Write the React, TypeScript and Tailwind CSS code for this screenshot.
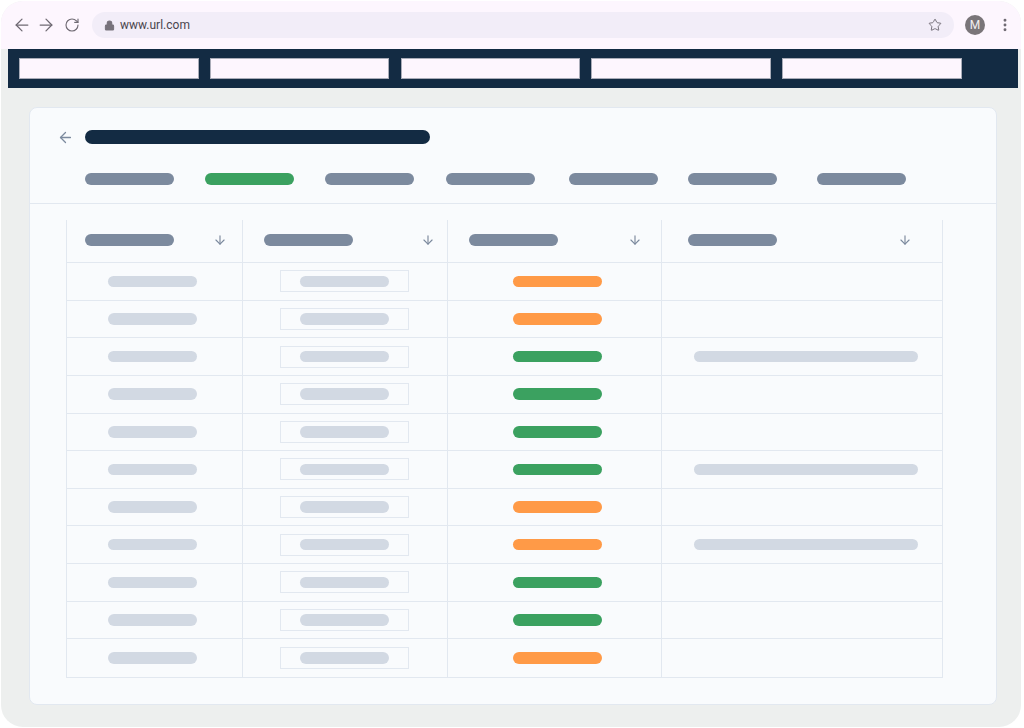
import { ArrowDown, ArrowLeft, ArrowRight, EllipsisVertical, Lock, RotateCw, Star } from 'lucide-react'

const navItems = [1, 2, 3, 4, 5]

const tabs = [
  { margin: '', color: 'bg-[#7c8a9e]' },
  { margin: 'ml-[31.5px]', color: 'bg-[#3ba160]' },
  { margin: 'ml-[31.5px]', color: 'bg-[#7c8a9e]' },
  { margin: 'ml-[32.5px]', color: 'bg-[#7c8a9e]' },
  { margin: 'ml-[34.5px]', color: 'bg-[#7c8a9e]' },
  { margin: 'ml-[30.5px]', color: 'bg-[#7c8a9e]' },
  { margin: 'ml-[40.5px]', color: 'bg-[#7c8a9e]' },
]

const columns = [
  { pad: 'pl-[18px] pr-[15px]', last: false },
  { pad: 'pl-[21px] pr-[12px]', last: false },
  { pad: 'pl-[21px] pr-[19px]', last: false },
  { pad: 'pl-[26px] pr-[30px]', last: true },
]

const rows = [
  { status: 'orange', note: false },
  { status: 'orange', note: false },
  { status: 'green', note: true },
  { status: 'green', note: false },
  { status: 'green', note: false },
  { status: 'green', note: true },
  { status: 'orange', note: false },
  { status: 'orange', note: true },
  { status: 'green', note: false },
  { status: 'green', note: false },
  { status: 'orange', note: false },
]

const Pill = ({ className }: { className: string }) => (
  <div className={`h-[11.5px] rounded-full ${className}`} />
)

const BrowserBar = () => (
  <div className="flex h-[48px] items-center bg-[#fdf6fe] pl-[11px] text-[#6f6a73]">
    <ArrowLeft size={20} strokeWidth={1.5} />
    <ArrowRight size={20} strokeWidth={1.5} className="ml-[4px]" />
    <RotateCw size={16} strokeWidth={1.7} className="ml-[8px]" />
    <div className="ml-[12px] flex h-[26px] w-[862px] items-center rounded-full bg-[#f2edf8] pl-[12px] pr-[12px]">
      <Lock size={11} strokeWidth={2.2} fill="currentColor" className="text-[#77727b]" />
      <span className="ml-[5px] font-['Roboto',sans-serif] text-[12px] text-[#4a454e]">www.url.com</span>
      <Star size={14} strokeWidth={1.6} className="ml-auto" />
    </div>
    <div className="ml-[11px] flex h-[20px] w-[20px] items-center justify-center rounded-full bg-[#7a7579] font-['Roboto',sans-serif] text-[12px] text-[#f1eef1]">
      M
    </div>
    <EllipsisVertical size={16} strokeWidth={2.4} className="ml-[12px]" />
  </div>
)

const NavBar = () => (
  <div className="ml-[7px] flex h-[39px] w-[1010px] items-center gap-[11.25px] bg-[#132b43] pl-[11px]">
    {navItems.map((item) => (
      <div key={item} className="h-[21px] w-[179.5px] border border-[#a9acb8] bg-[#fdf6fe]" />
    ))}
  </div>
)

const App = () => {
  return (
    <div className="h-[728px] w-[1024px] overflow-hidden bg-white pl-px pt-px">
      <div className="h-[726px] w-[1020px] overflow-hidden rounded-[22px] bg-[#edefee]">
        <BrowserBar />
        <NavBar />

        <div className="ml-[28px] mt-[19px] h-[598px] w-[968px] rounded-lg border border-[#e2e8f0] bg-[#f9fbfd]">
          <div className="mt-[22px] flex h-[14px] items-center pl-[27px]">
            <ArrowLeft size={17} strokeWidth={1.8} className="text-[#7c8a9e]" />
            <div className="ml-[11px] h-[14px] w-[345px] rounded-full bg-[#132b43]" />
          </div>

          <div className="mt-[29px] flex border-b border-[#e2e8f0] pb-[18.5px] pl-[55px]">
            {tabs.map((tab, index) => (
              <Pill key={index} className={`w-[88.5px] ${tab.margin} ${tab.color}`} />
            ))}
          </div>

          <div className="ml-[36px] mt-[16px] w-[877px] border-b border-[#e2e8f0]">
            <div className="grid h-[43px] grid-cols-[176px_205px_214px_282px] border-b border-[#e2e8f0]">
              {columns.map((col, index) => (
                <div
                  key={index}
                  className={`flex items-center justify-between border-l border-[#e2e8f0] pb-[2px] ${col.pad} ${col.last ? 'border-r' : ''}`}
                >
                  <Pill className="w-[88.5px] bg-[#7c8a9e]" />
                  <ArrowDown size={14} strokeWidth={2} className="text-[#7c8a9e]" />
                </div>
              ))}
            </div>

            {rows.map((row, index) => (
              <div
                key={index}
                className={`grid h-[37.64px] grid-cols-[176px_205px_214px_282px] ${index < rows.length - 1 ? 'border-b border-[#e2e8f0]' : ''}`}
              >
                <div className="flex items-center border-l border-[#e2e8f0] pl-[41px]">
                  <Pill className="w-[88.5px] bg-[#d2d9e3]" />
                </div>
                <div className="flex items-center border-l border-[#e2e8f0] pl-[37px]">
                  <div className="flex h-[22px] w-[129px] items-center justify-center border border-[#e2e8f0]">
                    <Pill className="w-[88.5px] bg-[#d2d9e3]" />
                  </div>
                </div>
                <div className="flex items-center border-l border-[#e2e8f0] pl-[65px]">
                  <Pill className={`w-[88.5px] ${row.status === 'green' ? 'bg-[#3ba160]' : 'bg-[#ff9a47]'}`} />
                </div>
                <div className="flex items-center border-x border-[#e2e8f0] pl-[32px]">
                  {row.note && <Pill className="w-[224px] bg-[#d2d9e3]" />}
                </div>
              </div>
            ))}
          </div>
        </div>
      </div>
    </div>
  )
}

export default App
